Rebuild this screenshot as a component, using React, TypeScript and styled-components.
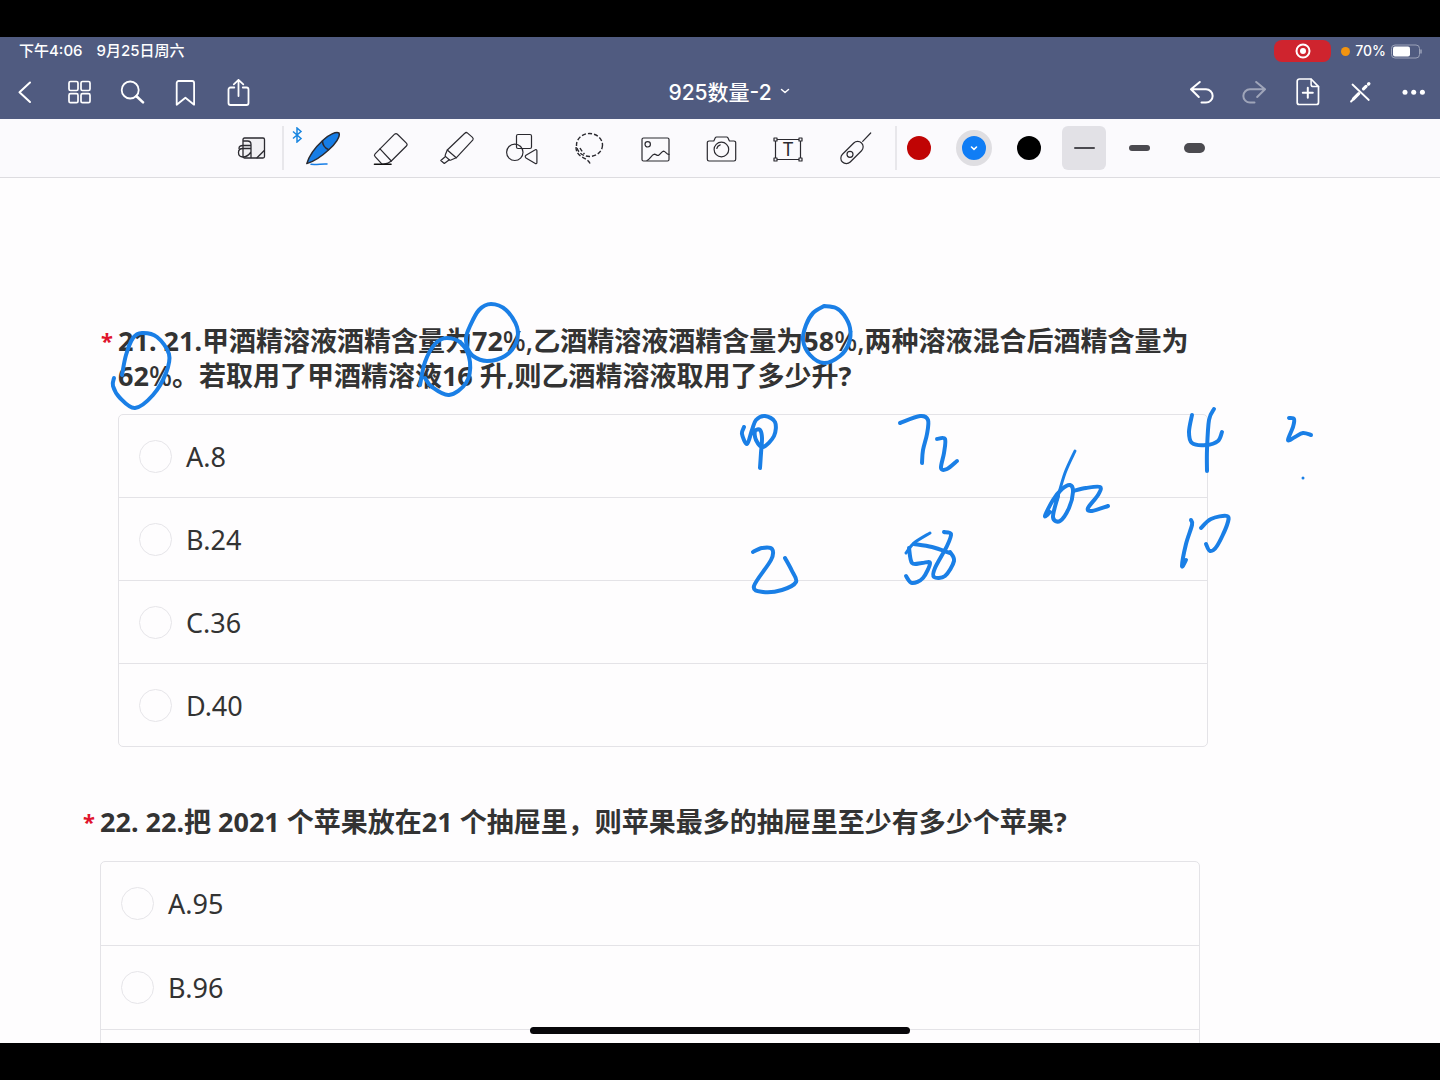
import React from "react";
import styled, { createGlobalStyle, css } from "styled-components";

const GlobalStyle = createGlobalStyle`
  *, *::before, *::after { box-sizing: border-box; }
  body { margin: 0; background: #000; }
`;

const uiFont = css`
  font-family: Inter, "Noto Sans CJK SC", sans-serif;
`;

const Device = styled.div`
  height: 100vh;
  padding: 37px 0;
  background: #000;
  display: flex;
  flex-direction: column;
  overflow: hidden;
  ${uiFont}
`;

const Header = styled.header`
  background: #505b80;
  color: #fff;
`;

const StatusBar = styled.div`
  height: 28px;
  padding: 0 18px 0 19px;
  display: flex;
  justify-content: space-between;
  align-items: center;
  font-size: 15px;
  line-height: 18px;
  font-weight: 500;
`;

const StatusGroup = styled.div<{ $gap: number }>`
  display: flex;
  align-items: center;
  gap: ${(p) => p.$gap}px;
`;

const StatusText = styled.span<{ $small?: boolean }>`
  padding-bottom: 1px;
  font-size: ${(p) => (p.$small ? 14 : 15)}px;
`;

const RecordPill = styled.button`
  width: 57px;
  height: 22px;
  margin-right: 5px;
  padding: 0;
  border: 0;
  border-radius: 8px;
  background: #cf242e;
  color: #fff;
  display: grid;
  place-items: center;
`;

const MicDot = styled.span`
  width: 9px;
  height: 9px;
  border-radius: 50%;
  background: #f2940f;
`;

const NavBar = styled.nav`
  height: 54px;
  display: grid;
  grid-template-columns: 1fr auto 1fr;
  align-items: center;
`;

const NavGroup = styled.div<{ $end?: boolean }>`
  display: flex;
  justify-content: ${(p) => (p.$end ? "flex-end" : "flex-start")};
`;

const NavButton = styled.button<{ $dim?: boolean }>`
  width: 53px;
  height: 44px;
  padding: 0;
  border: 0;
  background: none;
  color: #fff;
  opacity: ${(p) => (p.$dim ? 0.45 : 1)};
  display: grid;
  place-items: center;
`;

const TitleButton = styled.button`
  padding: 0 0 2px 18px;
  border: 0;
  background: none;
  color: #fff;
  font: inherit;
  font-size: 21px;
  font-weight: 500;
  display: flex;
  align-items: center;
  gap: 8px;
`;

const Toolbar = styled.div`
  height: 59px;
  flex: none;
  padding: 0 224px 0 222px;
  background: #fbfafd;
  border-bottom: 1px solid #dddce0;
  display: flex;
  align-items: center;
`;

const Divider = styled.span`
  width: 2px;
  height: 44px;
  background: #e8e7eb;
`;

const ToolButton = styled.button`
  position: relative;
  flex: 1;
  height: 58px;
  padding: 0;
  border: 0;
  background: none;
  color: #2b2a30;
  display: grid;
  place-items: center;
`;

const ReadModeButton = styled(ToolButton)`
  flex: 0 0 60px;
`;

const Tools = styled.div`
  flex: 1;
  margin: 0 7px;
  display: flex;
`;

const BluetoothBadge = styled.span`
  position: absolute;
  left: 0;
  top: 8px;
  color: #1a86e0;
  line-height: 0;
`;

const Presets = styled.div`
  display: flex;
  gap: 11px;
`;

const PresetButton = styled.button<{ $selected?: boolean }>`
  width: 44px;
  height: 44px;
  padding: 0;
  border: 0;
  border-radius: 6px;
  background: ${(p) => (p.$selected ? "#e2e1e6" : "transparent")};
  display: grid;
  place-items: center;
`;

const Swatch = styled.span<{ $color: string; $selected?: boolean }>`
  width: ${(p) => (p.$selected ? 36 : 24)}px;
  height: ${(p) => (p.$selected ? 36 : 24)}px;
  border: ${(p) => (p.$selected ? "6px solid #dfdee2" : "0")};
  border-radius: 50%;
  background: ${(p) => p.$color};
  color: #fff;
  display: grid;
  place-items: center;
`;

const StrokeSample = styled.span<{ $weight: number }>`
  width: 21px;
  height: ${(p) => p.$weight}px;
  border-radius: 5px;
  background: #4b4a50;
`;

const Canvas = styled.main`
  position: relative;
  flex: 1;
  min-height: 0;
  overflow: hidden;
  background: #fefdfe;
`;

const Question = styled.form<{ $top: number; $left: number; $right: number }>`
  padding: ${(p) => `${p.$top}px ${p.$right}px 0 ${p.$left}px`};
  font-family: "Noto Sans", "Noto Sans CJK SC", sans-serif;
  font-size: 27px;
  color: #333;
`;

const Prompt = styled.h2`
  margin: 0;
  font-size: 27px;
  font-weight: 700;
  line-height: 35px;
  display: flex;
`;

const Required = styled.span`
  flex: 0 0 17px;
  color: #e0142c;
  font-size: 22px;
`;

const Thin = styled.span`
  font-weight: 500;
`;

const Options = styled.div<{ $gap: number }>`
  margin: ${(p) => p.$gap}px 0 0 17px;
  border: 1px solid #e4e3e7;
  border-radius: 5px;
`;

const Option = styled.label<{ $height: number }>`
  box-sizing: content-box;
  height: ${(p) => p.$height}px;
  padding: 0 20px;
  display: flex;
  align-items: center;
  gap: 14px;

  & + & {
    border-top: 1px solid #e4e3e7;
  }
`;

const Radio = styled.input`
  appearance: none;
  width: 33px;
  height: 33px;
  margin: 0;
  border: 1px solid #e6e5e9;
  border-radius: 50%;
  background: #fefdfe;

  &:checked {
    border: 9px solid #1a7fe8;
  }
`;

const Ink = styled.svg`
  position: absolute;
  left: 0;
  top: 0;
  pointer-events: none;
`;

const HomeIndicator = styled.span`
  position: absolute;
  left: 50%;
  bottom: 9px;
  width: 380px;
  height: 7px;
  margin-left: -190px;
  border-radius: 4px;
  background: #08070a;
`;

type IconProps = { size: number; stroke?: number; children: React.ReactNode };

function Icon({ size, stroke = 2, children }: IconProps) {
  return (
    <svg
      width={size}
      height={size}
      viewBox={`0 0 ${size} ${size}`}
      fill="none"
      stroke="currentColor"
      strokeWidth={stroke}
      strokeLinecap="round"
      strokeLinejoin="round"
      aria-hidden="true"
    >
      {children}
    </svg>
  );
}

type Glyph = { label: string; art: React.ReactNode; dim?: boolean };

const leftNav: Glyph[] = [
  { label: "返回", art: <path d="M18 5.500 7.500 15.300 18 25" /> },
  {
    label: "缩略图",
    art: (
      <g strokeWidth="1.7">
        <rect x="4" y="4.500" width="9" height="9" rx="1.500" />
        <rect x="16" y="4.500" width="9" height="9" rx="1.500" />
        <rect x="4" y="16.700" width="9" height="9" rx="1.500" />
        <rect x="16" y="16.700" width="9" height="9" rx="1.500" />
      </g>
    ),
  },
  {
    label: "搜索",
    art: (
      <>
        <circle cx="12.200" cy="13" r="8.500" strokeWidth="1.800" />
        <path d="M18.500 19.200 25 25.400" strokeWidth="2.600" />
      </>
    ),
  },
  {
    label: "书签",
    art: <path strokeWidth="1.800" d="M7.700 4h13.400a2 2 0 0 1 2 2v21.700L14.400 20.700 5.700 27.700V6a2 2 0 0 1 2-2Z" />,
  },
  {
    label: "分享",
    art: (
      <path
        strokeWidth="1.800"
        d="M10.300 10.500H6.500a2 2 0 0 0-2 2V26a2 2 0 0 0 2 2h16a2 2 0 0 0 2-2V12.500a2 2 0 0 0-2-2H18.800M14.500 19V3M9.800 7.400 14.500 2.900 19.300 7.400"
      />
    ),
  },
];

const rightNav: Glyph[] = [
  { label: "撤销", art: <path d="M12.800 5 4 12.300 11.800 20M4.200 12.300h14.800a6.600 6.600 0 0 1 0 13.300h-4.500" /> },
  {
    label: "重做",
    dim: true,
    art: <path d="M16.200 5 25 12.300 17.200 20M24.800 12.300H10a6.600 6.600 0 0 0 0 13.300h4.500" />,
  },
  {
    label: "添加页面",
    art: (
      <>
        <path strokeWidth="1.700" d="M6.500 2h11.600l7.400 7.600v15.900a2 2 0 0 1-2 2H6.200a2 2 0 0 1-2-2V4.200A2.200 2.200 0 0 1 6.500 2Z" />
        <path strokeWidth="1.500" d="M18.100 2.200v5.200a2.200 2.200 0 0 0 2.200 2.200H25.500" />
        <path d="M14.800 10.700v10M9.800 15.700h10" />
      </>
    ),
  },
  {
    label: "只读模式",
    art: (
      <>
        <path d="M6.500 7.500 22.800 23" strokeWidth="1.800" />
        <path d="M22.900 6.600 22.500 7M20 9.400 17.500 11.800M12.700 16.700 7.500 21.800" strokeWidth="3.200" />
        <path d="M7 22.500 5.100 24.500" strokeWidth="2" />
      </>
    ),
  },
  {
    label: "更多",
    art: (
      <g fill="currentColor" stroke="none">
        <circle cx="6" cy="15.200" r="2.500" />
        <circle cx="14.700" cy="15.200" r="2.500" />
        <circle cx="23.400" cy="15.200" r="2.500" />
      </g>
    ),
  },
];

const tools: Glyph[] = [
  {
    label: "钢笔",
    art: (
      <>
        <path
          fill="#167de6"
          strokeWidth="1.500"
          d="M0.800 33.600C3 26 9 17.500 17 10.200 23 4.600 30 1.500 33 3 34.500 6.500 29.500 14 22.500 20 15.500 26.500 8 31.500 0.800 33.600Z"
        />
        <path d="M16.500 10.800c0 4 2 7 6 8.800" strokeWidth="1.500" />
        <path d="M5 34.300c6 0.700 11-0.800 16-0.300" stroke="#167de6" strokeWidth="1.500" />
      </>
    ),
  },
  {
    label: "橡皮擦",
    art: (
      <>
        <path d="M22.600 4.200a2 2 0 0 1 2.800 0l9 9a2 2 0 0 1 0 2.800L19.300 31 8 18.800Z" />
        <path d="m8 18.800-4.900 5a2 2 0 0 0 0 2.800l6 6.600a2 2 0 0 0 2.500 0.800c3-0.300 5.500-1 7.700-3" />
        <path d="M2.500 34.300h16.500" stroke="#111" strokeWidth="1.600" />
      </>
    ),
  },
  {
    label: "荧光笔",
    art: (
      <>
        <path d="M25.800 3.300a2 2 0 0 1 2.800-0.200l4.900 4.300a2 2 0 0 1 0.200 2.700L17.200 27.800 8.300 20Z" />
        <path d="m8.300 20-2 4.800a1.500 1.500 0 0 0 0.400 1.800l3.500 3.200a1.500 1.500 0 0 0 1.800 0.200l5.200-2.200" />
        <path d="m6.500 26.500-4.700 4 3.500 3 5-3.700" />
      </>
    ),
  },
  {
    label: "形状",
    art: (
      <>
        <rect x="11.500" y="4.500" width="15" height="14" rx="1.500" />
        <circle cx="9.800" cy="22.300" r="8.200" />
        <path d="M21 25.200 30.300 19.800a1 1 0 0 1 1.600 0.900v11.900a1 1 0 0 1-1.600 0.900L21 28a1.700 1.700 0 0 1 0-2.800Z" />
      </>
    ),
  },
  {
    label: "套索",
    art: (
      <g strokeDasharray="4.200 2" strokeWidth="1.400" strokeLinecap="butt">
        <ellipse cx="18.500" cy="15" rx="13" ry="11.500" />
        <path d="M5.100 17c-0.500 4 2 7.500 5.400 9.700 3.500 2 7 3 8.800 7.300" />
        <path d="M9 18c1 2 2.500 4 4.500 6" />
      </g>
    ),
  },
  {
    label: "图片",
    art: (
      <>
        <rect x="4" y="8" width="27" height="23" rx="1.500" />
        <circle cx="9.700" cy="14.300" r="2.700" />
        <path d="M9 30.500c3-1 4.500-6 7.500-6.300 1.500 0 2.500 1.700 4 1.200 2-0.700 3-4 5-4.300 2 0 3 3.500 5.500 3.200" />
      </>
    ),
  },
  {
    label: "相机",
    art: (
      <>
        <path d="M5 11h4.800l1.500-3.200a1.500 1.500 0 0 1 1.300-0.800h10a1.500 1.500 0 0 1 1.300 0.800L25.400 11H30a1.700 1.700 0 0 1 1.700 1.700v16.600A1.700 1.700 0 0 1 30 31H5a1.700 1.700 0 0 1-1.700-1.700V12.700A1.700 1.700 0 0 1 5 11Z" />
        <circle cx="17.400" cy="19.500" r="7.300" />
        <path d="M12.800 18.500a4.800 4.800 0 0 1 3.400-3.600" />
      </>
    ),
  },
  {
    label: "文本框",
    art: (
      <>
        <rect x="5.500" y="9.500" width="25" height="20" />
        <g fill="#fbfafd">
          <rect x="4" y="8" width="3" height="3" />
          <rect x="29" y="8" width="3" height="3" />
          <rect x="4" y="28" width="3" height="3" />
          <rect x="29" y="28" width="3" height="3" />
        </g>
        <text
          x="18"
          y="26"
          textAnchor="middle"
          fontSize="18"
          fontFamily="Inter, sans-serif"
          fill="currentColor"
          stroke="none"
        >
          T
        </text>
      </>
    ),
  },
  {
    label: "激光笔",
    art: (
      <>
        <rect x="1.500" y="17" width="27" height="11" rx="5.500" transform="rotate(-45 15 22.500)" />
        <circle cx="13" cy="24.300" r="3" />
        <path d="M25.700 11.300 33.700 3" />
      </>
    ),
  },
];

/* Pen strokes as sampled points, in canvas coordinates. */
const strokes: { w?: number; p: number[][] }[] = [
  { p: [[122, 197], [126, 177], [133, 160], [142, 155], [157, 159], [169, 176], [166, 195], [153, 217], [135, 230], [120, 220], [113, 208], [114, 200]] },
  { p: [[468, 174], [466, 160], [470, 148], [479, 132], [491, 126], [506, 132], [517, 149], [516, 165], [505, 178], [487, 183], [473, 178], [466, 168]] },
  { p: [[420, 207], [425, 184], [435, 166], [447, 160], [462, 166], [470, 184], [466, 205], [449, 217], [432, 209], [425, 200]] },
  { p: [[824, 128], [836, 130], [844, 137], [850, 150], [849, 165], [840, 178], [824, 185], [810, 177], [803, 162], [806, 147], [813, 135], [824, 128]] },
  { p: [[744, 249], [742, 256], [747, 266], [752, 252], [756, 242], [765, 238], [775, 244], [774, 258], [763, 269], [756, 262], [755, 253], [760, 252], [762, 260], [761, 275], [760, 290]] },
  { p: [[900, 245], [920, 238], [928, 242], [927, 256], [923, 272], [922, 285]] },
  { p: [[937, 261], [945, 261], [944, 275], [941, 290], [947, 291], [957, 283]] },
  { p: [[753, 374], [762, 370], [772, 371], [771, 382], [754, 408], [763, 414], [782, 412], [796, 404], [792, 393], [785, 380]] },
  { w: 3, p: [[930, 355], [914, 365], [906, 375]] },
  { w: 4, p: [[914, 366], [932, 369], [950, 375]] },
  { p: [[909, 370], [912, 385], [922, 385], [930, 385], [923, 400], [912, 405], [906, 398]] },
  { p: [[944, 354], [951, 356], [947, 368], [935, 390], [934, 399], [945, 398], [954, 383], [950, 374]] },
  { w: 3, p: [[1075, 273], [1065, 295], [1057, 322]] },
  { p: [[1058, 318], [1053, 339], [1060, 343], [1069, 330], [1073, 314], [1070, 307], [1062, 311], [1053, 322], [1045, 338], [1050, 334]] },
  { p: [[1073, 313], [1086, 310], [1100, 309], [1098, 317], [1088, 330], [1092, 333], [1108, 328]] },
  { p: [[1192, 237], [1189, 254], [1192, 265], [1206, 267], [1218, 263], [1222, 254]] },
  { p: [[1214, 231], [1209, 242], [1207, 272], [1207, 293]] },
  { p: [[1289, 240], [1294, 241], [1293, 249], [1288, 262], [1295, 259], [1303, 255], [1311, 257]] },
  { w: 3, p: [[1303, 300], [1303, 300]] },
  { p: [[1191, 342], [1192, 347], [1186, 366], [1182, 388], [1186, 382]] },
  { p: [[1201, 350], [1211, 341], [1227, 338], [1227, 347], [1217, 368], [1210, 373], [1206, 366]] },
];

/* Catmull-Rom spline through the sampled points. */
function spline(p: number[][]) {
  let d = `M${p[0][0]} ${p[0][1]}`;
  for (let i = 0; i < p.length - 1; i++) {
    const a = p[i - 1] ?? p[i];
    const b = p[i];
    const c = p[i + 1];
    const e = p[i + 2] ?? c;
    d += `C${b[0] + (c[0] - a[0]) / 6} ${b[1] + (c[1] - a[1]) / 6} ${c[0] - (e[0] - b[0]) / 6} ${c[1] - (e[1] - b[1]) / 6} ${c[0]} ${c[1]}`;
  }
  return d;
}

function OptionList({ name, items, height, gap }: { name: string; items: string[]; height: number; gap: number }) {
  return (
    <Options $gap={gap}>
      {items.map((text) => (
        <Option key={text} $height={height}>
          <Radio type="radio" name={name} />
          {text}
        </Option>
      ))}
    </Options>
  );
}

export default function App() {
  return (
    <>
      <GlobalStyle />
      <Device>
        <Header>
          <StatusBar>
            <StatusGroup $gap={14}>
              <StatusText>下午4:06</StatusText>
              <StatusText>9月25日周六</StatusText>
            </StatusGroup>
            <StatusGroup $gap={5}>
              <RecordPill aria-label="正在录制">
                <Icon size={16}>
                  <circle cx="8" cy="8" r="6.500" />
                  <circle cx="8" cy="8" r="3" fill="currentColor" stroke="none" />
                </Icon>
              </RecordPill>
              <MicDot />
              <StatusText $small>70%</StatusText>
              <svg width="31" height="15" viewBox="0 0 31 15" fill="none" aria-hidden="true">
                <rect x="0.500" y="1" width="28" height="13" rx="3.500" stroke="#9ba2b8" />
                <rect x="2" y="2.500" width="17" height="10" rx="2" fill="#fff" />
                <path d="M30 5.500v4" stroke="#9ba2b8" strokeWidth="1.500" />
              </svg>
            </StatusGroup>
          </StatusBar>
          <NavBar>
            <NavGroup>
              {leftNav.map((g) => (
                <NavButton key={g.label} aria-label={g.label}>
                  <Icon size={30}>{g.art}</Icon>
                </NavButton>
              ))}
            </NavGroup>
            <TitleButton>
              925数量-2
              <Icon size={10} stroke={1.5}>
                <path d="M1.500 3.500 5 6.500 8.500 3.500" />
              </Icon>
            </TitleButton>
            <NavGroup $end>
              {rightNav.map((g) => (
                <NavButton key={g.label} aria-label={g.label} $dim={g.dim}>
                  <Icon size={30}>{g.art}</Icon>
                </NavButton>
              ))}
            </NavGroup>
          </NavBar>
        </Header>

        <Toolbar>
          <ReadModeButton aria-label="缩放窗口">
            <Icon size={36} stroke={1.3}>
              <rect x="9" y="8" width="21.500" height="20" rx="1.500" fill="#f1f0f3" />
              <path d="M23 27.800 30.300 20.500" />
              <path d="M9.500 11h4c2.500 0 3.500 1.500 3.500 3.500v13M17 18.500H9c-3 0-4.500 1.500-4.500 4s1.500 4.500 4.500 4.500 5.500-1.500 8-5M5 18.500c0-2 1.500-3 4-3h8" />
            </Icon>
          </ReadModeButton>
          <Divider />
          <Tools>
            {tools.map((g, i) => (
              <ToolButton key={g.label} aria-label={g.label}>
                {i === 0 && (
                  <BluetoothBadge>
                    <svg width="12" height="16" viewBox="0 0 12 16" fill="none" stroke="currentColor" strokeWidth="1.500">
                      <path d="M2 4.500 10 11.500 6 15V1l4 3.500L2 11.500" />
                    </svg>
                  </BluetoothBadge>
                )}
                <Icon size={36} stroke={1.2}>
                  {g.art}
                </Icon>
              </ToolButton>
            ))}
          </Tools>
          <Divider />
          <Presets>
            <PresetButton aria-label="红色">
              <Swatch $color="#c00404" />
            </PresetButton>
            <PresetButton aria-label="蓝色">
              <Swatch $color="#107df5" $selected>
                <Icon size={8} stroke={1.6}>
                  <path d="M1.500 3 4 5.300 6.500 3" />
                </Icon>
              </Swatch>
            </PresetButton>
            <PresetButton aria-label="黑色">
              <Swatch $color="#000" />
            </PresetButton>
            <PresetButton aria-label="细" $selected>
              <StrokeSample $weight={2} />
            </PresetButton>
            <PresetButton aria-label="中">
              <StrokeSample $weight={6} />
            </PresetButton>
            <PresetButton aria-label="粗">
              <StrokeSample $weight={10} />
            </PresetButton>
          </Presets>
        </Toolbar>

        <Canvas>
          <Question $top={145} $left={101} $right={232}>
            <Prompt>
              <Required>*</Required>
              <span>
                21. 21.甲酒精溶液酒精含量为72<Thin>%,</Thin>乙酒精溶液酒精含量为58<Thin>%,</Thin>
                两种溶液混合后酒精含量为62<Thin>%</Thin>。若取用了甲酒精溶液16 升,则乙酒精溶液取用了多少升?
              </span>
            </Prompt>
            <OptionList name="q21" items={["A.8", "B.24", "C.36", "D.40"]} height={82} gap={21} />
          </Question>
          <Question $top={57} $left={83} $right={240}>
            <Prompt>
              <Required>*</Required>
              <span>22. 22.把 2021 个苹果放在21 个抽屉里，则苹果最多的抽屉里至少有多少个苹果?</span>
            </Prompt>
            <OptionList name="q22" items={["A.95", "B.96", ""]} height={83} gap={22} />
          </Question>
          <Ink width="1440" height="865" viewBox="0 0 1440 865" fill="none" stroke="#1a7fe6" strokeLinecap="round" strokeLinejoin="round" aria-hidden="true">
            {strokes.map((s, i) => (
              <path key={i} d={spline(s.p)} strokeWidth={s.w ?? 4} />
            ))}
          </Ink>
          <HomeIndicator />
        </Canvas>
      </Device>
    </>
  );
}
